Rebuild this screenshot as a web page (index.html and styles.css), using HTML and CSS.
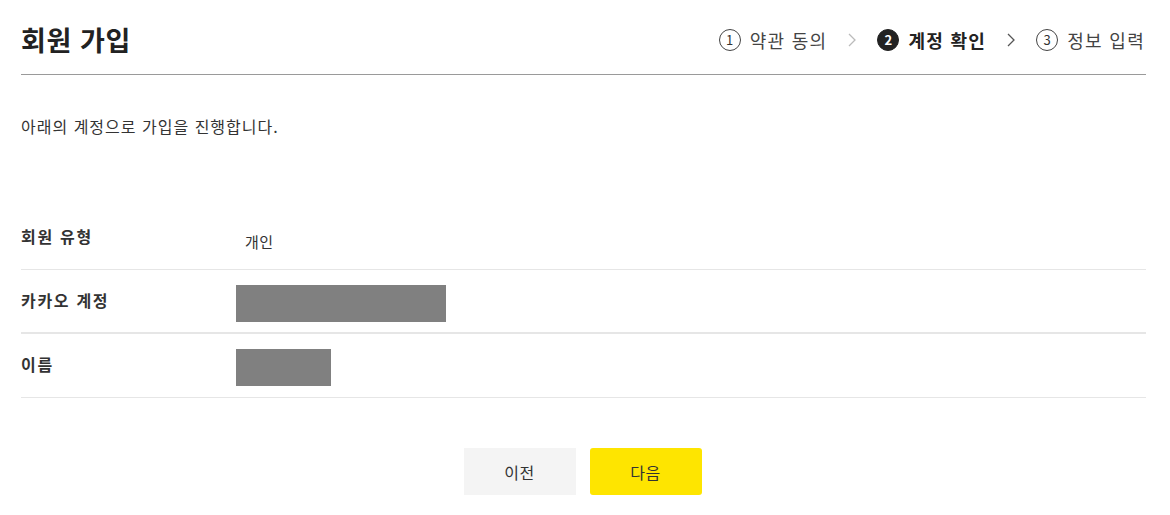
FILE: index.html
```html
<!DOCTYPE html>
<html lang="ko">
<head>
<meta charset="utf-8">
<title>회원 가입</title>
<link rel="stylesheet" href="styles.css">
</head>
<body>
<div class="page">
  <header class="head">
    <h1 class="title">회원 가입</h1>
    <ol class="steps">
      <li class="step"><span class="num">1</span><span class="label">약관 동의</span></li>
      <li class="chev light"><svg width="8" height="14" viewBox="0 0 8 14"><path d="M1 1l6 6-6 6" fill="none" stroke="currentColor" stroke-width="1.3"/></svg></li>
      <li class="step active"><span class="num">2</span><span class="label">계정 확인</span></li>
      <li class="chev"><svg width="8" height="14" viewBox="0 0 8 14"><path d="M1 1l6 6-6 6" fill="none" stroke="currentColor" stroke-width="1.3"/></svg></li>
      <li class="step"><span class="num">3</span><span class="label">정보 입력</span></li>
    </ol>
  </header>

  <p class="intro">아래의 계정으로 가입을 진행합니다.</p>

  <dl class="info">
    <div class="row first">
      <dt class="key">회원 유형</dt>
      <dd class="val"><span class="text">개인</span></dd>
    </div>
    <div class="row second">
      <dt class="key">카카오 계정</dt>
      <dd class="val"><span class="mask wide"></span></dd>
    </div>
    <div class="row">
      <dt class="key">이름</dt>
      <dd class="val"><span class="mask short"></span></dd>
    </div>
  </dl>

  <div class="actions">
    <button class="btn prev" type="button">이전</button>
    <button class="btn next" type="button">다음</button>
  </div>
</div>
</body>
</html>
```

FILE: styles.css
```css
* { box-sizing: border-box; }
html, body { margin: 0; padding: 0; background: #fff; }
body {
  font-family: "Noto Sans CJK KR", "Noto Sans", sans-serif;
  color: #333;
}
.page { padding: 0 24px 0 21px; }

.head {
  display: flex;
  align-items: center;
  justify-content: space-between;
  height: 75px;
  padding-top: 5px;
  border-bottom: 1px solid #9a9a9a;
}
.title {
  margin: 0;
  font-size: 27px;
  font-weight: 700;
  letter-spacing: 0.6px;
  color: #222;
  line-height: 32px;
}
.steps {
  display: flex;
  align-items: center;
  gap: 21px;
  list-style: none;
  margin: 0;
  padding: 0 1px 0 0;
}
.step { display: flex; align-items: center; gap: 9px; }
.num {
  width: 22px; height: 22px;
  border: 1px solid #444;
  border-radius: 50%;
  display: flex; align-items: center; justify-content: center;
  font-size: 13px;
  line-height: 1;
  color: #333;
}
.label { font-size: 18px; letter-spacing: 1.3px; line-height: 24px; color: #444; }
.step.active .num { background: #222; border-color: #222; color: #fff; font-weight: 700; }
.step.active .label { font-weight: 700; color: #222; }
.chev { display: flex; color: #555; }
.chev.light { color: #bbb; }

.intro {
  margin: 39px 0 0;
  font-size: 16px;
  letter-spacing: 1px;
  line-height: 24px;
  color: #333;
}

.info { margin: 68px 0 0; }
.row {
  display: flex;
  align-items: flex-start;
  padding: 15px 0 11px;
  border-bottom: 1px solid #e6e6e6;
}
.row.second { border-bottom-width: 2px; padding-bottom: 10px; }
.key {
  width: 215px;
  font-size: 16px;
  font-weight: 700;
  letter-spacing: 1.7px;
  line-height: 30px;
  color: #333;
}
.val { margin: 0; height: 37px; display: flex; align-items: center; }
.text { font-size: 15px; letter-spacing: 0.5px; color: #333; padding: 4px 0 0 9px; }
.mask { display: block; height: 37px; background: #808080; }
.mask.wide { width: 210px; }
.mask.short { width: 95px; }

.actions {
  display: flex;
  justify-content: center;
  gap: 14px;
  margin-top: 50px;
  padding-right: 2px;
}
.btn {
  width: 112px;
  height: 47px;
  border: 0;
  font-family: inherit;
  font-size: 16px;
  letter-spacing: 0.5px;
  color: #333;
  cursor: pointer;
}
.btn.prev { background: #f4f4f4; }
.btn.next { background: #fee500; border-radius: 3px; }
```
